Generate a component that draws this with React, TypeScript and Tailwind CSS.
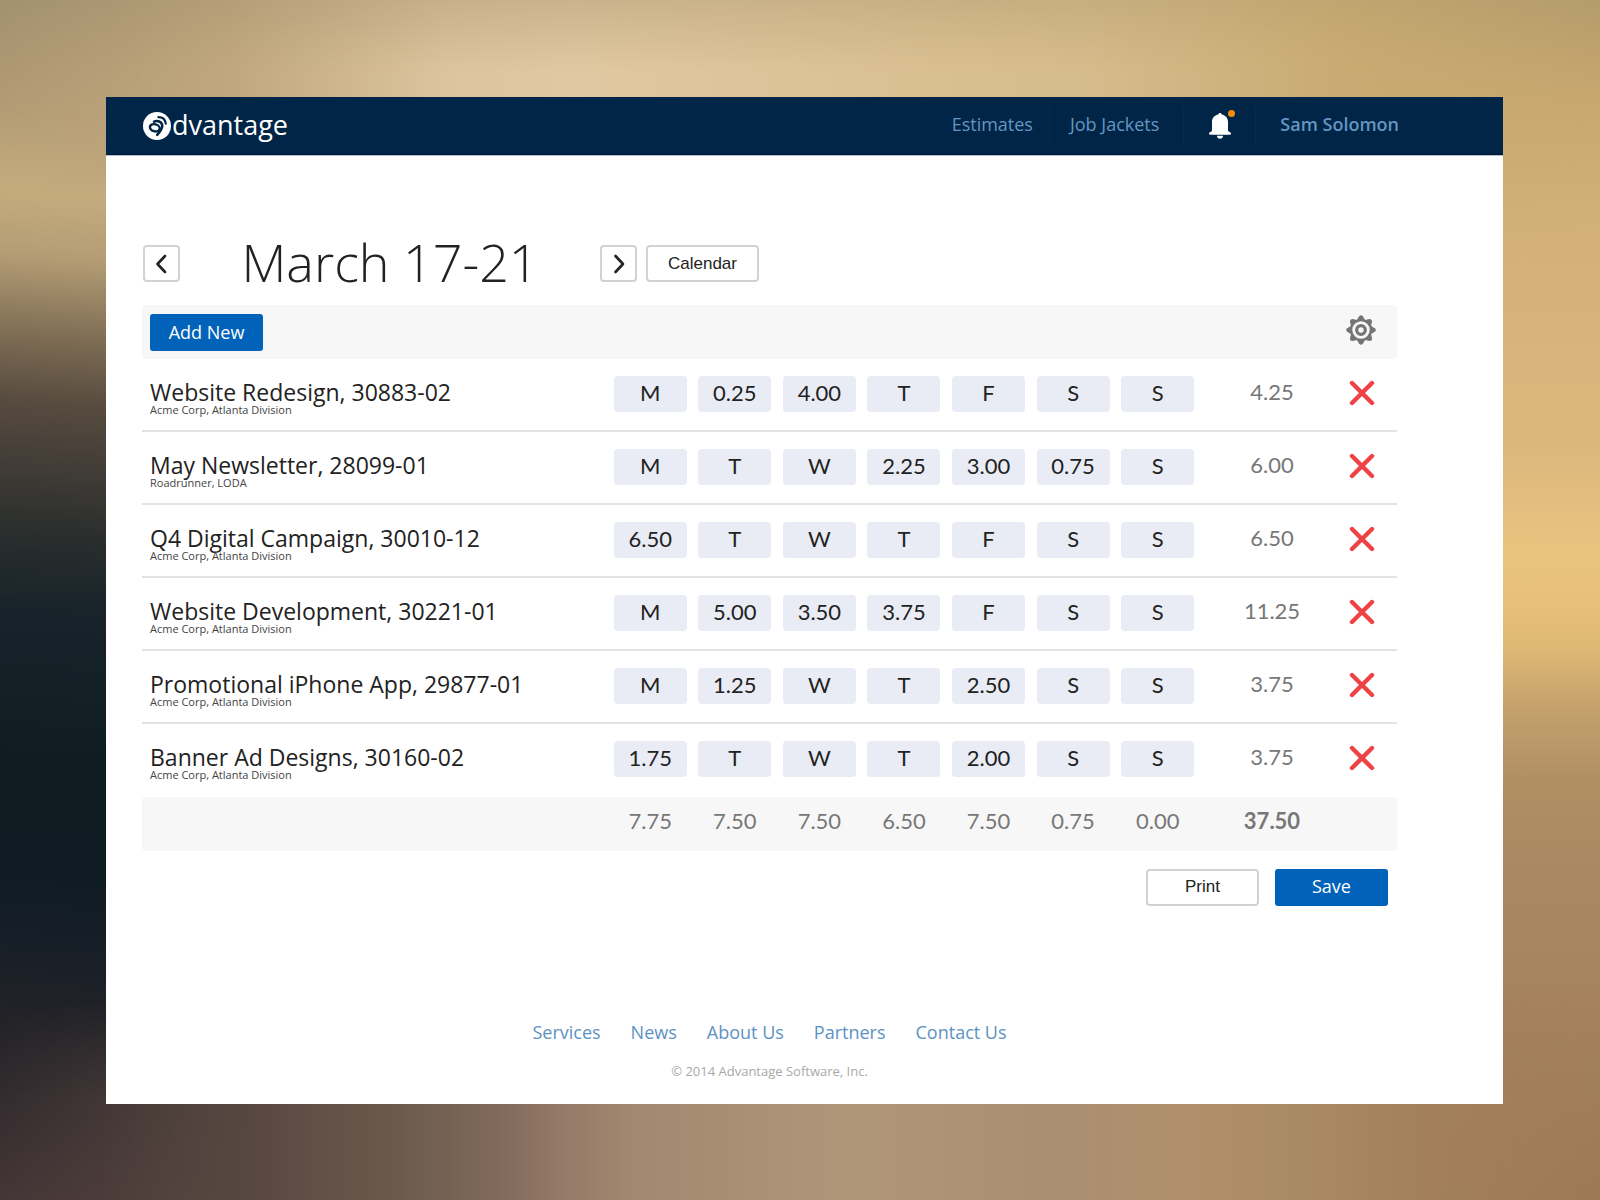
import React, { useState } from "react";

const DAYS = ["M", "T", "W", "T", "F", "S", "S"];
const DAY_NAMES = ["Monday", "Tuesday", "Wednesday", "Thursday", "Friday", "Saturday", "Sunday"];

const JOBS = [
  { id: "30883-02", name: "Website Redesign", client: "Acme Corp, Atlanta Division", hours: ["", "0.25", "4.00", "", "", "", ""], total: "4.25" },
  { id: "28099-01", name: "May Newsletter", client: "Roadrunner, LODA", hours: ["", "", "", "2.25", "3.00", "0.75", ""], total: "6.00" },
  { id: "30010-12", name: "Q4 Digital Campaign", client: "Acme Corp, Atlanta Division", hours: ["6.50", "", "", "", "", "", ""], total: "6.50" },
  { id: "30221-01", name: "Website Development", client: "Acme Corp, Atlanta Division", hours: ["", "5.00", "3.50", "3.75", "", "", ""], total: "11.25" },
  { id: "29877-01", name: "Promotional iPhone App", client: "Acme Corp, Atlanta Division", hours: ["", "1.25", "", "", "2.50", "", ""], total: "3.75" },
  { id: "30160-02", name: "Banner Ad Designs", client: "Acme Corp, Atlanta Division", hours: ["1.75", "", "", "", "2.00", "", ""], total: "3.75" },
];

const DAY_TOTALS = ["7.75", "7.50", "7.50", "6.50", "7.50", "0.75", "0.00"];
const FOOTER_LINKS = ["Services", "News", "About Us", "Partners", "Contact Us"];

function Backdrop() {
  return (
    <div aria-hidden="true" className="absolute inset-0 -z-10 overflow-hidden">
      {/* left edge: sand to near black */}
      <div className="absolute inset-0 bg-[linear-gradient(184deg,#a2916f_8%,#b49c75_17%,#c5ac7e_23%,#b39c74_28%,#7e6c54_34%,#574b3f_39%,#413c37_44%,#2a2e2d_49%,#17232a_55%,#0e1c22_67%,#0e1b22_74%,#161e27_80%,#232328_86%,#352d30_93%,#453637_100%)]" />
      {/* right edge */}
      <div className="absolute inset-0 bg-[linear-gradient(180deg,#b59c6c_0%,#c7a76e_8%,#d1b077_17%,#d8b37b_28%,#dcb77d_37%,#e9c37f_46%,#e8c07b_50%,#dfb875_54%,#c4a16c_59%,#b08f64_65%,#a98962_72%,#a7855f_80%,#a27f5b_90%,#9d7a53_100%)] [mask-image:linear-gradient(90deg,transparent_6%,black_85%)]" />
      {/* top band */}
      <div className="absolute inset-x-0 top-0 h-1/5 bg-[linear-gradient(90deg,#a2916f00_0%,#bfa67d_14%,#dcc49e_28%,#e0c8a2_36%,#ddc298_50%,#d6bb8c_68%,#c8ab72_84%,#b89d6600_100%)] [mask-image:linear-gradient(180deg,#0009_0%,black_30%,black_45%,transparent_100%)]" />
      {/* bottom band */}
      <div className="absolute inset-x-0 bottom-0 h-1/6 bg-[linear-gradient(90deg,#40353600_0%,#584841_16%,#69594b_24%,#80695a_31%,#937968_35%,#a1876e_39%,#b09679_53%,#ab8e72_66%,#b0906c_74%,#a98b63_81%,#a2805a_89%,#a37c5300_100%)] [mask-image:linear-gradient(180deg,transparent_0%,black_50%)]" />
    </div>
  );
}

function Logo() {
  return (
    <a href="#home" aria-label="advantage" className="flex items-center gap-px text-white">
      <svg width="28" height="28" viewBox="0 0 28 28">
        <circle cx="14" cy="14" r="14" fill="#fff" />
        <g fill="none" stroke="#002546" strokeLinecap="round">
          {/* bowl, stem and the swoosh over the top */}
          <ellipse cx="11.8" cy="15.8" rx="5" ry="3.5" strokeWidth="2.4" transform="rotate(16 11.8 15.8)" />
          <path d="M11 9.6C14.6 8.2 18.6 9.6 19.2 13C19.6 16.2 17.2 19.6 14.2 22.8" strokeWidth="2.6" />
          <path d="M15.4 5.2C19.4 5.2 22.2 7.6 22.8 11.6" strokeWidth="2.2" />
        </g>
      </svg>
      <span className="text-[27px] leading-8 font-medium pb-0.5">dvantage</span>
    </a>
  );
}

function Bell() {
  return (
    <svg width="22" height="26" viewBox="0 0 22 26" fill="#fff">
      <path d="M11 0C12 0 12.6.7 12.6 1.6C16.6 2.3 19 5.2 19 9V17C19 18.2 19.6 18.6 20.6 19C21.6 19.4 22 19.9 22 20.6C22 21.4 21.6 21.8 20.8 21.8H1.2C.4 21.8 0 21.4 0 20.6C0 19.9.4 19.4 1.4 19C2.4 18.6 3 18.2 3 17V9C3 5.2 5.4 2.3 9.4 1.6C9.4.7 10 0 11 0Z" />
      <path d="M8 22.8H14C14 24.6 12.8 25.8 11 25.8C9.2 25.8 8 24.6 8 22.8Z" />
    </svg>
  );
}

function Gear() {
  return (
    <svg width="30" height="30" viewBox="0 0 30 30">
      <g fill="#757575" stroke="#757575" strokeWidth="2" strokeLinejoin="round">
        {[0, 45, 90, 135, 180, 225, 270, 315].map((a) => (
          <path key={a} d="M11.8 5.4L14 1.7Q15 .8 16 1.7L18.2 5.4Z" transform={`rotate(${a} 15 15)`} />
        ))}
      </g>
      <circle cx="15" cy="15" r="9.9" fill="#f7f7f7" stroke="#757575" strokeWidth="2.4" />
      <circle cx="15" cy="15" r="4.3" fill="none" stroke="#757575" strokeWidth="3.2" />
    </svg>
  );
}

function Chevron({ d }: { d: string }) {
  return (
    <svg width="12" height="20" viewBox="0 0 12 20" fill="none" stroke="#222" strokeWidth="2.6" strokeLinecap="round" strokeLinejoin="round">
      <path d={d} />
    </svg>
  );
}

const outlineBtn = "h-[37px] flex items-center justify-center rounded border-2 border-[#d2d2d2] bg-white text-[#222]";
const blueBtn = "h-[37px] w-[113px] rounded-[3px] bg-[#0063b9] text-white text-lg leading-6";

export default function App() {
  const [jobs, setJobs] = useState(JOBS);

  const setHours = (id: string, day: number, value: string) =>
    setJobs(jobs.map((j) => (j.id === id ? { ...j, hours: j.hours.map((h, i) => (i === day ? value : h)) } : j)));

  return (
    <div className="relative isolate min-h-screen pt-[97px] pl-[106px] pr-[97px] pb-24 font-['Open_Sans',sans-serif]">
      <Backdrop />

      <div className="bg-white">
        {/* header */}
        <header className="h-[58px] flex items-center justify-between pl-[37px] pr-[104px] bg-[#002546] border-b border-[#001737] shadow-[0_1px_0_#b9bfd0]">
          <Logo />
          <nav className="flex items-center text-lg leading-6 text-[#6595c1]">
            <a href="#estimates" className="h-9 flex items-center pb-[3px] pr-4 border-r border-[#002e57]">Estimates</a>
            <a href="#jackets" className="h-9 flex items-center pb-[3px] pl-5 pr-6 border-r border-[#002e57]">Job Jackets</a>
            <button aria-label="Notifications" className="relative h-9 w-[72px] flex items-center justify-center border-r border-[#002e57]">
              <Bell />
              <span className="absolute top-0.5 right-5 size-[7px] rounded-full bg-[#f68b0a]" />
            </button>
            <a href="#account" className="h-9 flex items-center pb-[3px] pl-6 font-semibold">Sam Solomon</a>
          </nav>
        </header>

        <main className="pl-9 pr-[106px] pt-[90px]">
          {/* week picker */}
          <div className="flex items-center pl-px mb-[23px]">
            <button aria-label="Previous week" className={`${outlineBtn} w-[37px]`}><Chevron d="M9 2L1.5 10L9 18" /></button>
            <h1 className="w-[420px] h-[37px] flex items-center justify-center pb-[3px] text-[52px] font-light text-[#222]">March 17-21</h1>
            <button aria-label="Next week" className={`${outlineBtn} w-[37px]`}><Chevron d="M2.5 2L10 10L2.5 18" /></button>
            <button className={`${outlineBtn} w-[113px] ml-[9px] font-['Liberation_Sans',sans-serif] text-[17px]`}>Calendar</button>
          </div>

          <div className="h-[54px] flex items-center justify-between pl-2 pr-[21px] rounded bg-[#f7f7f7]">
            <button className={blueBtn}>Add New</button>
            <button aria-label="Settings" className="pb-1"><Gear /></button>
          </div>

          <table className="w-full table-fixed border-separate border-spacing-0">
            <colgroup>
              <col className="w-[466px]" />
              {DAYS.map((_, i) => <col key={i} />)}
              <col className="w-[144px]" />
              <col className="w-[53px]" />
            </colgroup>
            <tbody className="[&>tr:not(:last-child)>td]:border-b-2 [&>tr>td]:border-[#e3e3e3]">
              {jobs.map((job) => (
                <tr key={job.id} className="h-[73px]">
                  <td className="align-top pt-[21px] pl-2">
                    <p className="text-[23px] leading-6 text-[#222]">{job.name}, {job.id}</p>
                    <p className="text-[11px] leading-3 text-[#444]">{job.client}</p>
                  </td>
                  {job.hours.map((h, i) => (
                    <td key={i} className="align-top pt-[17px]">
                      <input
                        aria-label={`${job.name}, ${DAY_NAMES[i]}`}
                        value={h}
                        placeholder={DAYS[i]}
                        onChange={(e) => setHours(job.id, i, e.target.value)}
                        className="block mx-auto w-[73px] h-9 pb-1 rounded bg-[#e9ecf4] text-center font-['Lato',sans-serif] text-[22px] text-[#222] placeholder:text-[#222] placeholder:opacity-100"
                      />
                    </td>
                  ))}
                  <td className="align-top pt-[21px] text-center font-['Lato',sans-serif] text-[22px] leading-6 text-[#777]">{job.total}</td>
                  <td className="align-top pt-[21px] pr-[18px]">
                    <button
                      aria-label={`Remove ${job.name}`}
                      onClick={() => setJobs(jobs.filter((j) => j.id !== job.id))}
                      className="block mx-auto"
                    >
                      <svg width="26" height="26" viewBox="0 0 26 26" stroke="#ee4245" strokeWidth="4.4" strokeLinecap="round">
                        <path d="M3 3L23 23M23 3L3 23" />
                      </svg>
                    </button>
                  </td>
                </tr>
              ))}
            </tbody>
            <tfoot>
              <tr className="h-[54px] font-['Lato',sans-serif] text-[22px] leading-6 text-[#777] [&>td]:bg-[#f7f7f7] [&>td]:pb-1.5">
                <td className="rounded-l" />
                {DAY_TOTALS.map((t, i) => <td key={i} className="text-center">{t}</td>)}
                <td className="text-center font-bold">37.50</td>
                <td className="rounded-r" />
              </tr>
            </tfoot>
          </table>

          <div className="flex justify-end gap-4 mt-[18px] pr-[9px]">
            <button className={`${outlineBtn} w-[113px] pb-0.5 font-['Liberation_Sans',sans-serif] text-[17px]`}>Print</button>
            <button className={`${blueBtn} pb-[3px]`}>Save</button>
          </div>

          <footer className="mt-[114px] pb-[23px] text-center">
            <nav className="flex justify-center gap-[30px] text-lg leading-6 text-[#5d92c3]">
              {FOOTER_LINKS.map((l) => <a key={l} href="#footer">{l}</a>)}
            </nav>
            <p className="mt-[17px] text-[13px] leading-5 text-[#a8a8a8]">© 2014 Advantage Software, Inc.</p>
          </footer>
        </main>
      </div>
    </div>
  );
}
